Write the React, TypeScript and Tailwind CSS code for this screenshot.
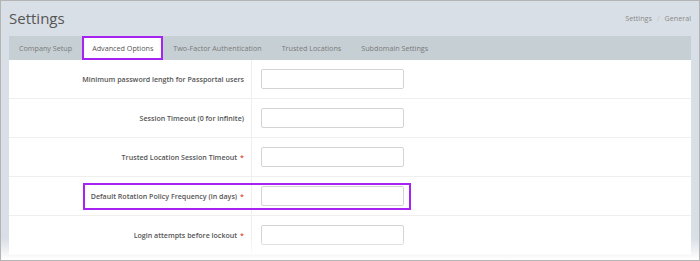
const TABS = ['Company Setup', 'Advanced Options', 'Two-Factor Authentication', 'Trusted Locations', 'Subdomain Settings'];

const ROWS = [
  { label: 'Minimum password length for Passportal users', required: false },
  { label: 'Session Timeout (0 for infinite)', required: false },
  { label: 'Trusted Location Session Timeout', required: true },
  { label: 'Default Rotation Policy Frequency (in days)', required: true },
  { label: 'Login attempts before lockout', required: true },
];

export default function App() {
  return (
    <div
      className="relative w-[700px] h-[261px] overflow-hidden border border-[#b4b4b4] bg-[#d9dfe6] text-[#555]"
      style={{ fontFamily: '"Open Sans", "Liberation Sans", sans-serif' }}
    >
      <div className="flex h-[35px] items-center justify-between pl-2 pr-2">
        <h1 className="text-[15px] leading-none">Settings</h1>
        <div className="flex items-center gap-[5px] text-[7.2px] text-[#8a8a8a]">
          <span>Settings</span>
          <span className="text-[#c4c4c4]">/</span>
          <span>General</span>
        </div>
      </div>

      <div className="mx-2 flex h-[24px] items-stretch bg-[#c6cfd4] text-[7.2px] text-[#7a7a7a]">
        {TABS.map((t, i) => (
          <div
            key={t}
            className={
              i === 1
                ? 'flex items-center border-2 border-[#a623f2] bg-white px-[8px] text-[#555]'
                : 'flex items-center px-[10px]'
            }
          >
            {t}
          </div>
        ))}
      </div>

      <div className="mx-2 bg-white">
        {ROWS.map((r) => (
          <div key={r.label} className="flex h-[39px] border-b border-[#efefef]">
            <div className="flex w-[243px] items-center justify-end border-r border-[#efefef] pr-[7px] text-[7.1px] font-semibold">
              {r.label}
              {r.required && <span className="ml-[3px] text-[#e24a3b]">*</span>}
            </div>
            <div className="flex items-center pl-[9px]">
              <input className="h-[20px] w-[143px] rounded-[2px] border border-[#d4d4d4] bg-white" />
            </div>
          </div>
        ))}
      </div>

      <div className="pointer-events-none absolute left-[82px] top-[182px] h-[27px] w-[328px] border-2 border-[#a623f2]" />
      <div className="pointer-events-none absolute bottom-0 left-0 h-[22px] w-full bg-gradient-to-b from-white/0 to-white" />
    </div>
  );
}
